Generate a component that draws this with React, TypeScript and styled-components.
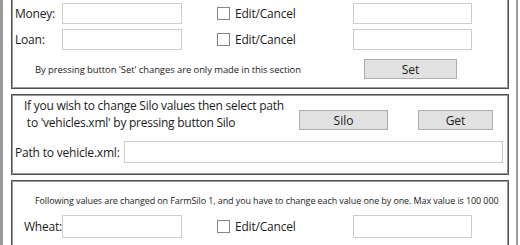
import * as React from 'react'
import styled, { createGlobalStyle } from 'styled-components'

const GlobalStyle = createGlobalStyle`
  html, body {
    margin: 0;
    padding: 0;
    background: #ffffff;
    overflow: hidden;
  }
  body {
    font-family: 'Open Sans', 'Noto Sans', sans-serif;
    color: #1b1b1b;
  }
`

const Window = styled.div`
  width: 518px;
  height: 245px;
  box-sizing: border-box;
  border-left: 3px solid #9a9a9a;
  border-right: 2px solid #9a9a9a;
  padding: 0 7px 0 8px;
  display: flex;
  flex-direction: column;
  gap: 5px;
  overflow: hidden;
`

const Panel = styled.div<{ $cut?: boolean }>`
  border: 1px solid #4e4e4e;
  box-shadow: inset 0 0 0 1px #9c9c9c;
  background: #fff;
  margin-top: ${(p) => (p.$cut ? '-12px' : '0')};
  flex-shrink: 0;
`

const FieldGrid = styled.div<{ $top?: number; $bottom?: number }>`
  display: grid;
  grid-template-columns: 47px 120px 35px 136px 119px;
  row-gap: 5px;
  align-items: center;
  padding: ${(p) => p.$top ?? 14}px 0 ${(p) => p.$bottom ?? 0}px 3px;
`

const Label = styled.span<{ $right?: boolean }>`
  font-size: 12px;
  letter-spacing: -0.2px;
  text-align: ${(p) => (p.$right ? 'right' : 'left')};
  white-space: nowrap;
`

const TextBox = styled.div<{ $h?: number }>`
  height: ${(p) => p.$h ?? 21}px;
  box-sizing: border-box;
  border: 1px solid #cdcdcd;
  background: #fff;
`

const CheckRow = styled.label`
  display: flex;
  align-items: center;
  gap: 5px;
  font-size: 12px;
  letter-spacing: -0.2px;
`

const CheckBox = styled.span`
  width: 13px;
  height: 13px;
  box-sizing: border-box;
  border: 1px solid #858585;
  background: #fff;
`

const Footer = styled.div`
  display: flex;
  align-items: center;
  padding: 9px 51px 9px 23px;
`

const Note = styled.span<{ $size?: number }>`
  font-size: ${(p) => p.$size ?? 10}px;
  letter-spacing: -0.1px;
  white-space: nowrap;
`

const Button = styled.div<{ $w: number }>`
  width: ${(p) => p.$w}px;
  height: 20px;
  box-sizing: border-box;
  border: 1px solid #adadad;
  background: #e1e1e1;
  font-size: 12px;
  display: flex;
  align-items: center;
  justify-content: center;
`

const SiloTop = styled.div`
  display: flex;
  align-items: flex-start;
  padding: 2px 0 0 12px;
`

const Intro = styled.div`
  width: 275px;
  font-size: 12px;
  line-height: 17px;
  letter-spacing: -0.25px;
  white-space: nowrap;
`

const ButtonGroup = styled.div`
  display: flex;
  gap: 30px;
  margin: 13px 0 0 0;
`

const PathRow = styled.div`
  display: flex;
  align-items: center;
  gap: 4px;
  padding: 10px 5px 11px 3px;
`

const Grow = styled.div`
  flex: 1;
`

const SiloNote = styled.div`
  padding: 11px 0 8px 23px;
  line-height: 13px;
`

const FieldRow = ({ label, right }: { label: string; right?: boolean }) => (
  <>
    <Label $right={right}>{label}</Label>
    <TextBox $h={right ? 23 : 21} />
    <span />
    <CheckRow>
      <CheckBox />
      Edit/Cancel
    </CheckRow>
    <TextBox $h={right ? 23 : 21} />
  </>
)

const App: React.FunctionComponent = () => (
  <>
    <GlobalStyle />
    <Window>
      <Panel $cut>
        <FieldGrid>
          <FieldRow label="Money:" />
          <FieldRow label="Loan:" />
        </FieldGrid>
        <Footer>
          <Note $size={9.5}>By pressing button 'Set' changes are only made in this section</Note>
          <Grow />
          <Button $w={93}>Set</Button>
        </Footer>
      </Panel>
      <Panel>
        <SiloTop>
          <Intro>
            If you wish to change Silo values then select path
            <br />
            &nbsp;to 'vehicles.xml' by pressing button Silo
          </Intro>
          <ButtonGroup>
            <Button $w={89}>Silo</Button>
            <Button $w={75}>Get</Button>
          </ButtonGroup>
        </SiloTop>
        <PathRow>
          <Label>Path to vehicle.xml:</Label>
          <Grow>
            <TextBox $h={22} />
          </Grow>
        </PathRow>
      </Panel>
      <Panel>
        <SiloNote>
          <Note $size={9}>
            Following values are changed on FarmSilo 1, and you have to change each value one by one. Max value is 100 000
          </Note>
        </SiloNote>
        <FieldGrid $top={0} $bottom={30}>
          <FieldRow label="Wheat:" right />
        </FieldGrid>
      </Panel>
    </Window>
  </>
)

export default App
